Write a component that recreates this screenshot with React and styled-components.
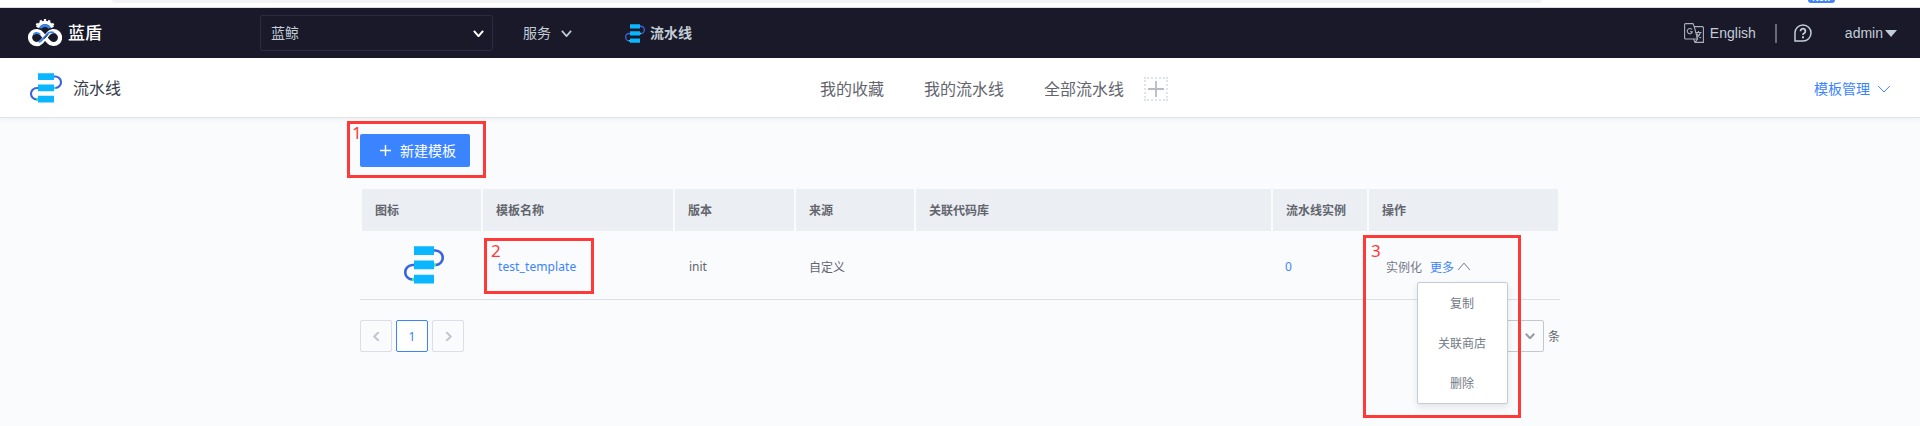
import React from "react";
import styled, { createGlobalStyle, css } from "styled-components";

const GlobalStyle = createGlobalStyle`
  *, *::before, *::after { box-sizing: border-box; }
  body {
    margin: 0;
    background: #fafbfd;
    color: #63656e;
    font-family: "Noto Sans", "Noto Sans CJK SC", sans-serif;
    font-size: 12px;
    overflow: hidden;
  }
`;

const Page = styled.div`
  position: relative;
  width: 1920px;
  height: 426px;
  overflow: hidden;
`;

const BrowserStrip = styled.div`
  display: flex;
  justify-content: space-between;
  height: 8px;
  padding: 0 85px 0 112px;
  background: #fff;
  border-bottom: 1px solid #dadce3;
`;

const AddressBar = styled.div`
  width: 1430px;
  height: 3px;
  background: #f1f3f4;
  border-radius: 0 0 8px 8px;
`;

const NewBadge = styled.div`
  display: flex;
  align-items: flex-end;
  justify-content: center;
  width: 27px;
  height: 3px;
  border-radius: 0 0 3px 3px;
  background: #4285f4;
  color: #fff;
  font: bold 9px/9px "Liberation Sans", sans-serif;
  overflow: hidden;
`;

const Header = styled.header`
  display: flex;
  align-items: center;
  height: 50px;
  padding: 0 23px 0 28px;
  background: #191929;
  color: #c3cdd7;
  font-size: 14px;
  line-height: 20px;
`;

const Brand = styled.div`
  display: flex;
  align-items: center;
  gap: 6px;
  width: 232px;
  color: #fff;
  font-size: 17px;
`;

const BrandName = styled.span`
  margin-top: -1px;
  font-weight: 500;
`;

const ProjectSelect = styled.div`
  display: flex;
  align-items: center;
  justify-content: space-between;
  width: 233px;
  height: 36px;
  margin-right: 30px;
  padding: 0 8px 0 10px;
  border: 1px solid #2a2a42;
  border-radius: 2px;
`;

const ServiceMenu = styled.div`
  display: flex;
  align-items: center;
  gap: 10px;
  width: 102px;
`;

const CurrentService = styled.div`
  display: flex;
  align-items: center;
  gap: 5px;
  font-weight: bold;
`;

const HeaderTools = styled.div`
  display: flex;
  align-items: center;
  margin-left: auto;
  font-family: "Liberation Sans", sans-serif;
`;

const Language = styled.div`
  display: flex;
  align-items: center;
  gap: 6px;
  width: 91px;
`;

const Divider = styled.i`
  width: 2px;
  height: 19px;
  margin-right: 17px;
  background: #666b78;
`;

const UserMenu = styled.div`
  display: flex;
  align-items: center;
  gap: 2px;
  margin-left: 33px;
`;

const SubHeader = styled.div`
  display: grid;
  grid-template-columns: 820px 1fr auto;
  align-items: center;
  height: 60px;
  padding-right: 29px;
  background: #fff;
  border-bottom: 1px solid #dde4eb;
  box-shadow: 0 2px 5px rgba(51, 60, 72, 0.05);
  font-size: 16px;
  line-height: 24px;
`;

const ModuleTitle = styled.div`
  display: flex;
  align-items: center;
  gap: 11px;
  padding-left: 30px;
  color: #333c48;
`;

const Tabs = styled.nav`
  display: flex;
  align-items: center;
  gap: 40px;
  padding-top: 2px;
`;

const AddView = styled.span`
  display: flex;
  align-items: center;
  justify-content: center;
  width: 24px;
  height: 24px;
  margin-left: -20px;
  border: 2px dotted #dde4eb;
`;

const TemplateManage = styled.div`
  display: flex;
  align-items: center;
  gap: 7px;
  padding-top: 2px;
  color: #3a84ff;
  font-size: 14px;
`;

const Content = styled.main`
  width: 1200px;
  margin-left: 360px;
  padding-top: 16px;
`;

const CreateButton = styled.button`
  display: flex;
  align-items: center;
  gap: 9px;
  width: 110px;
  height: 33px;
  padding: 0 0 0 20px;
  border: 0;
  border-radius: 2px;
  background: #3a84ff;
  color: #fff;
  font: 14px/20px "Noto Sans", "Noto Sans CJK SC", sans-serif;
`;

const columns = css`
  display: grid;
  grid-template-columns: 119px 190px 119px 118px 355px 94px 189px;
  column-gap: 2px;
  padding: 0 2px;
`;

const TableHead = styled.div`
  ${columns}
  height: 42px;
  margin-top: 22px;
`;

const HeadCell = styled.div`
  display: flex;
  align-items: center;
  padding-left: 13px;
  background: #ebeef3;
  font-weight: bold;
`;

const TableRow = styled.div`
  ${columns}
  height: 69px;
  border-bottom: 1px solid #dcdee5;
`;

const Cell = styled.div`
  display: flex;
  align-items: center;
  padding: 3px 0 0 ${(p) => p.$inset ?? 13}px;
  color: ${(p) => (p.$link ? "#3a84ff" : "#63656e")};
`;

const TemplateName = styled(Cell)`
  letter-spacing: 0.09px;
`;

const Actions = styled(Cell)`
  position: relative;
  color: #737987;
`;

const More = styled.span`
  display: flex;
  align-items: center;
  gap: 3px;
  margin-left: 8px;
  color: #3a84ff;
`;

const Menu = styled.div`
  position: absolute;
  z-index: 2;
  top: 51px;
  left: 48px;
  width: 91px;
  height: 122px;
  border: 1px solid #c3cdd7;
  border-radius: 2px;
  background: #fff;
  box-shadow: 0 3px 6px rgba(51, 60, 72, 0.12);
`;

const MenuItem = styled.div`
  height: 40px;
  padding-right: 1px;
  line-height: 42px;
  text-align: center;
`;

const Footer = styled.div`
  display: flex;
  justify-content: space-between;
  padding-top: 20px;
`;

const Pages = styled.div`
  display: flex;
  gap: 4px;
`;

const PageButton = styled.div`
  display: flex;
  align-items: center;
  justify-content: center;
  width: 32px;
  height: 32px;
  border: 1px solid ${(p) => (p.$active ? "#3a84ff" : "#dcdee5")};
  border-radius: 2px;
  background: ${(p) => (p.$active ? "#fff" : "transparent")};
  color: #3a84ff;
`;

const PageSize = styled.div`
  display: flex;
  align-items: center;
  gap: 4px;
`;

const SizeSelect = styled.div`
  display: flex;
  align-items: center;
  justify-content: flex-end;
  width: 64px;
  height: 32px;
  padding-right: 8px;
  border: 1px solid #c4c6cc;
  border-radius: 2px;
`;

const Callout = styled.div`
  position: absolute;
  z-index: 3;
  left: ${(p) => p.$x}px;
  top: ${(p) => p.$y}px;
  width: ${(p) => p.$w}px;
  height: ${(p) => p.$h}px;
  padding: ${(p) => p.$pad};
  border: 3px solid #ff3838;
  color: #ff3838;
  font-size: 17px;
  line-height: 18px;
`;

const Chevron = ({ width, height, color, stroke = 2, dir = "down" }) => {
  const d = {
    down: "M1 1 L6 7 L11 1",
    up: "M1 7 L6 1 L11 7",
    left: "M9 0 L3 4 L9 8",
    right: "M3 0 L9 4 L3 8",
  }[dir];
  return (
    <svg width={width} height={height} viewBox="0 0 12 8" preserveAspectRatio="none" fill="none" stroke={color} strokeWidth={stroke}>
      <path d={d} vectorEffect="non-scaling-stroke" />
    </svg>
  );
};

const Plus = ({ size, color, stroke }) => (
  <svg width={size} height={size} viewBox={`0 0 ${size} ${size}`} stroke={color} strokeWidth={stroke}>
    <path d={`M0 ${size / 2}H${size}M${size / 2} 0V${size}`} />
  </svg>
);

const PipelineIcon = ({ width, height }) => (
  <svg width={width} height={height} viewBox="0 0 40 38" preserveAspectRatio="none" fill="none">
    <path d="M30 4.500H31.500A7.200 7.200 0 0 1 31.500 19H30M10 19H8.500A7.200 7.200 0 0 0 8.500 33.500H10" stroke="#3b65de" strokeWidth="2.600" />
    <path d="M30 17.500h2v3h-2zM8 32h2v3H8z" fill="#2df09a" />
    <path d="M10 .3h20v8.700H10zM10 14.500h20v8.700H10zM10 28.800h20v8.700H10z" fill="#0ab7ff" />
  </svg>
);

const Logo = () => (
  <svg width="34" height="28" viewBox="0 0 34 28" fill="none">
    {/* gear */}
    <path d="M9.600 8.500A8 8 0 0 1 24.400 8.500" stroke="#fff" strokeWidth="3.400" />
    <path d="M17 0v4M12.400 1.200l1.600 3.200M21.600 1.200L20 4.400M8.300 4.800l3 2.200M25.700 4.800l-3 2.200" stroke="#fff" strokeWidth="2.300" />
    <path d="M12.300 9.200Q13.600 6.600 17 6.600T21.700 9.200" stroke="#3a84e8" strokeWidth="2.600" />
    {/* infinity loops */}
    <path d="M20.200 14.800A6.500 6.500 0 1 1 20.500 22.600L17 18.600L13.700 14.600A6.500 6.500 0 1 0 13.300 23L17 18.600Z" stroke="#fff" strokeWidth="4.200" />
    <path d="M5.600 15.200Q8.800 12.600 12.200 15.600M10.600 23.200Q12.800 22.600 15.200 19.600L19.400 14.800Q22.400 12 26 13.800" stroke="#3a84e8" strokeWidth="1.900" />
    <path d="M16.200 19.700L20.200 15.200" stroke="#191929" strokeWidth="1" />
  </svg>
);

const TranslateIcon = () => (
  <svg width="20" height="20" viewBox="0 0 20 20" fill="none" stroke="#a9b1bd" strokeWidth="1.100">
    <path d="M.6 1.600Q.6.6 1.600.6H9l1.200 3H18.400Q19.400 3.600 19.400 4.600V19.400H11L9.600 16H1.600Q.6 16 .6 15ZM10.200 3.600L13.600 16H9.600M11 19.400L13.600 16" />
    <path d="M7.900 6.500A2.600 2.600 0 1 0 8.400 8.700H6M11.800 9.500H17.500M14.500 8v1.500M16.500 9.500Q15.600 13 12.400 14.500M13 10.500Q14 13.500 17.200 15" />
  </svg>
);

const HelpIcon = () => (
  <svg width="18" height="18" viewBox="0 0 18 18" fill="none" stroke="#c3cdd7" strokeWidth="1.500">
    <path d="M1 17V9A8 8 0 1 1 9 17Z" />
    <path d="M6.600 7.200A2.400 2.400 0 1 1 10.400 9Q9 9.800 9 11" strokeWidth="1.800" />
    <path d="M9 12.200v2" strokeWidth="2" />
  </svg>
);

const Triangle = () => (
  <svg width="12" height="7" viewBox="0 0 11 7" preserveAspectRatio="none" fill="#c3cdd7">
    <path d="M0 0H11L5.500 7Z" />
  </svg>
);

const IconCell = styled.div`
  display: flex;
  align-items: center;
  justify-content: flex-start;
  padding-left: 42px;
`;

const heads = ["图标", "模板名称", "版本", "来源", "关联代码库", "流水线实例", "操作"];
const tabs = ["我的收藏", "我的流水线", "全部流水线"];
const menuItems = ["复制", "关联商店", "删除"];

export default function App() {
  return (
    <Page>
      <GlobalStyle />
      <BrowserStrip>
        <AddressBar />
        <NewBadge>New</NewBadge>
      </BrowserStrip>
      <Header>
        <Brand>
          <Logo />
          <BrandName>蓝盾</BrandName>
        </Brand>
        <ProjectSelect>
          蓝鲸
          <Chevron width={11} height={7} color="#fff" />
        </ProjectSelect>
        <ServiceMenu>
          服务
          <Chevron width={11} height={7} color="#c3cdd7" stroke={1.7} />
        </ServiceMenu>
        <CurrentService>
          <PipelineIcon width={20} height={19} />
          流水线
        </CurrentService>
        <HeaderTools>
          <Language>
            <TranslateIcon />
            English
          </Language>
          <Divider />
          <HelpIcon />
          <UserMenu>
            admin
            <Triangle />
          </UserMenu>
        </HeaderTools>
      </Header>
      <SubHeader>
        <ModuleTitle>
          <PipelineIcon width={32} height={30} />
          流水线
        </ModuleTitle>
        <Tabs>
          {tabs.map((t) => (
            <span key={t}>{t}</span>
          ))}
          <AddView>
            <Plus size={16} color="#b5bcc6" stroke={1.8} />
          </AddView>
        </Tabs>
        <TemplateManage>
          模板管理
          <Chevron width={14} height={8} color="#3a84ff" stroke={1} />
        </TemplateManage>
      </SubHeader>
      <Content>
        <CreateButton>
          <Plus size={11} color="#fff" stroke={1.4} />
          新建模板
        </CreateButton>
        <TableHead>
          {heads.map((h) => (
            <HeadCell key={h}>{h}</HeadCell>
          ))}
        </TableHead>
        <TableRow>
          <IconCell>
            <PipelineIcon width={40} height={38} />
          </IconCell>
          <TemplateName $link $inset={15}>test_template</TemplateName>
          <Cell $inset={14}>init</Cell>
          <Cell>自定义</Cell>
          <Cell />
          <Cell $link $inset={12}>0</Cell>
          <Actions $inset={17}>
            实例化
            <More>
              更多
              <Chevron width={14} height={9} color="#737987" stroke={1} dir="up" />
            </More>
            <Menu>
              {menuItems.map((m) => (
                <MenuItem key={m}>{m}</MenuItem>
              ))}
            </Menu>
          </Actions>
        </TableRow>
        <Footer>
          <Pages>
            <PageButton>
              <Chevron width={9} height={9} color="#c4c6cc" dir="left" />
            </PageButton>
            <PageButton $active>1</PageButton>
            <PageButton>
              <Chevron width={9} height={9} color="#c4c6cc" dir="right" />
            </PageButton>
          </Pages>
          <PageSize>
            <SizeSelect>
              <Chevron width={10} height={6} color="#979ba5" />
            </SizeSelect>
            条
          </PageSize>
        </Footer>
      </Content>
      <Callout $x={347} $y={121} $w={139} $h={57} $pad="0 0 0 2px">1</Callout>
      <Callout $x={484} $y={238} $w={110} $h={56} $pad="1px 0 0 4px">2</Callout>
      <Callout $x={1363} $y={235} $w={158} $h={183} $pad="4px 0 0 5px">3</Callout>
    </Page>
  );
}
